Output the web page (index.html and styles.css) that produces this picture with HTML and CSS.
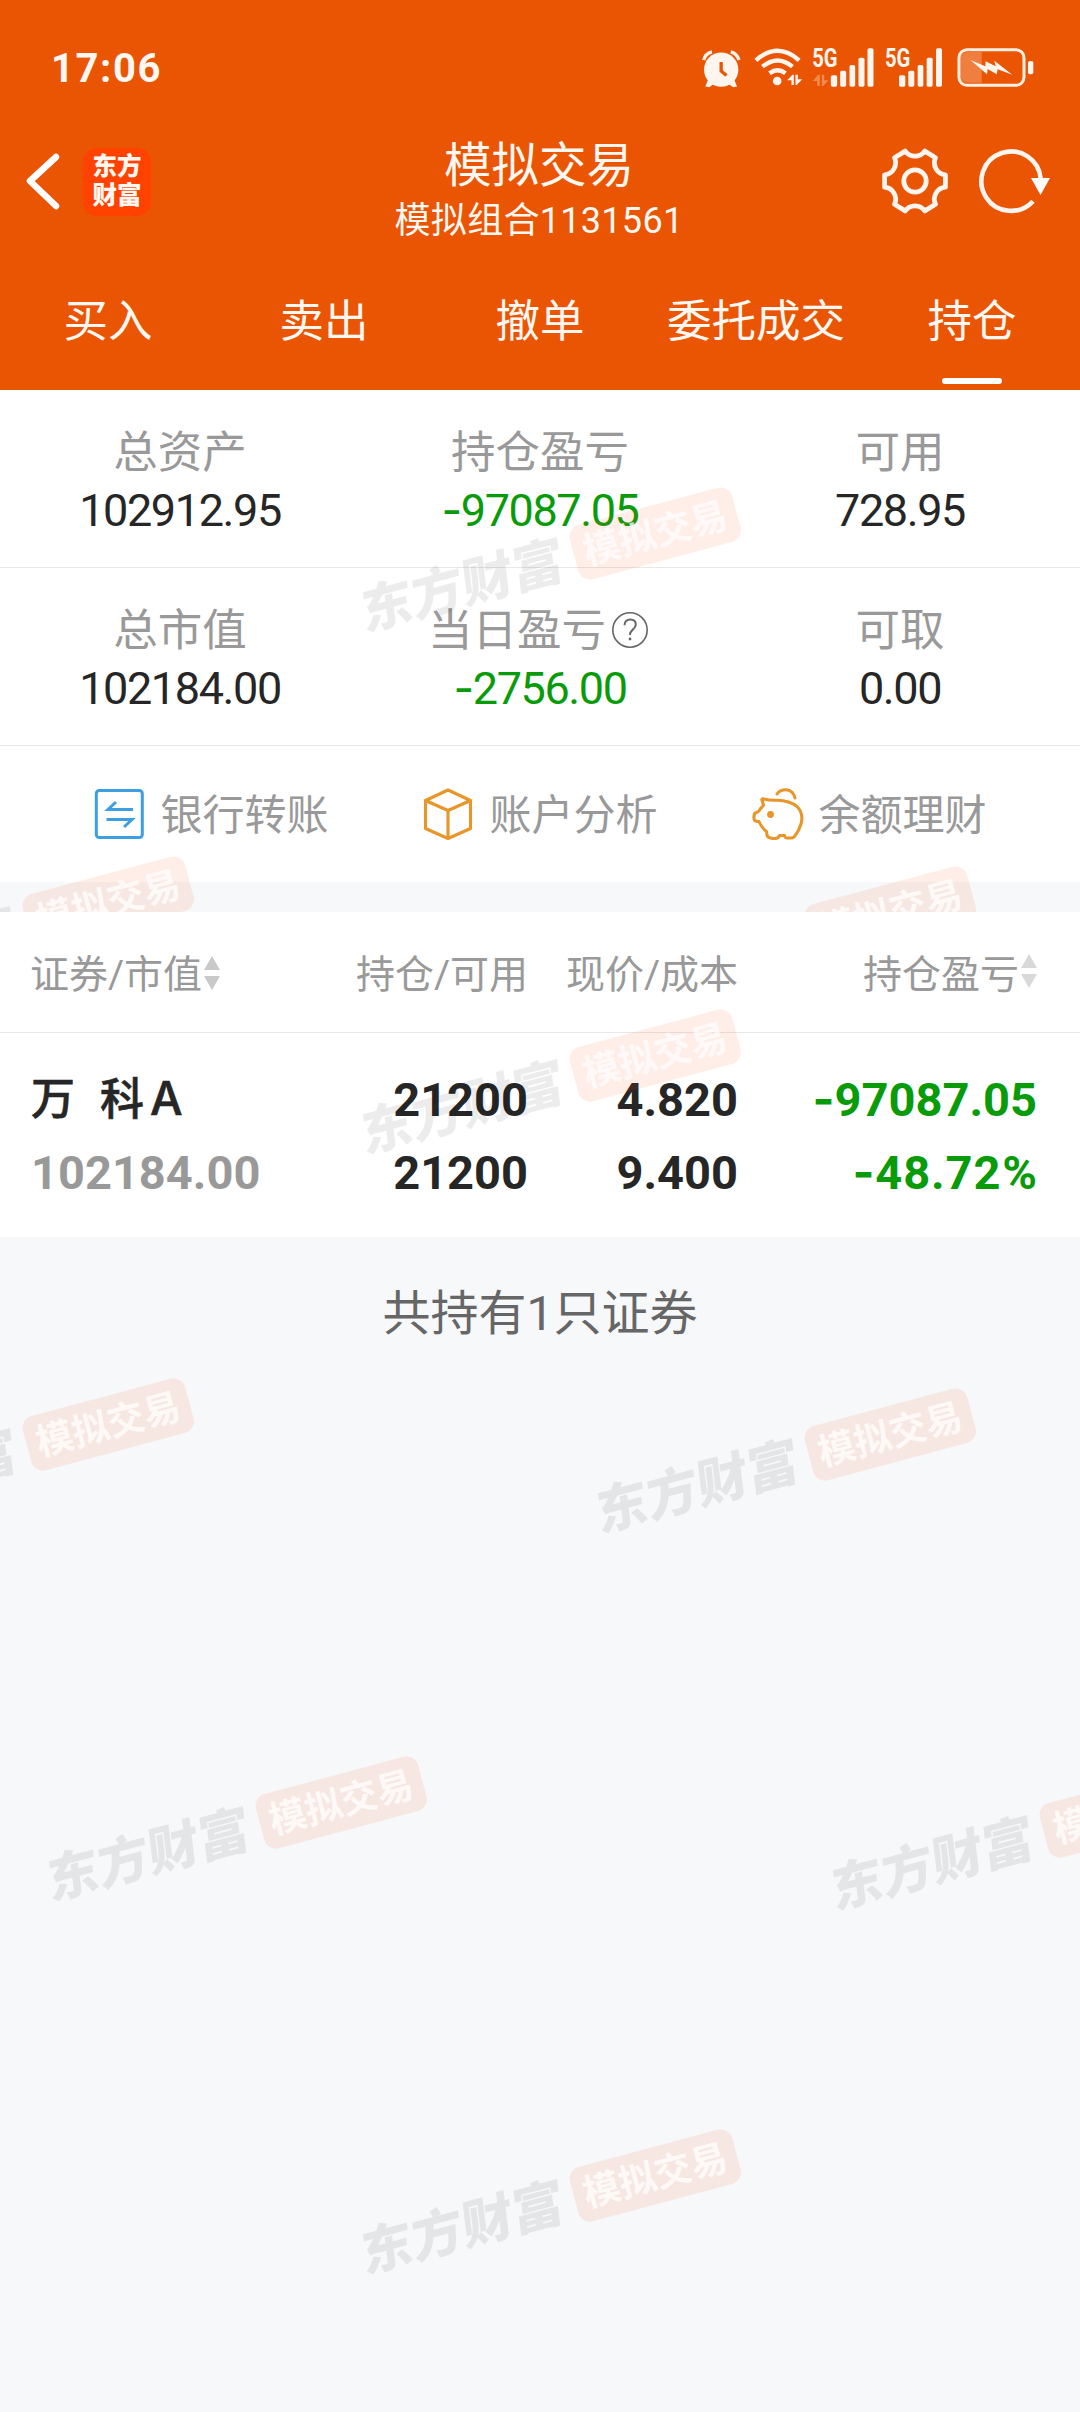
FILE: index.html
```html
<!DOCTYPE html>
<html lang="zh-CN">
<head>
<meta charset="utf-8">
<title>模拟交易</title>
<link rel="stylesheet" href="styles.css">
</head>
<body>
<div class="app">
  <header class="header">
    <div class="status">
      <span class="time">17:06</span>
      <div class="status-icons">
        <svg class="i-alarm" viewBox="66 54 118 120" width="39" height="40">
          <g fill="#fff5ef"><circle cx="124" cy="119" r="52"/><path d="M84 150l-8 20 12 2 16-12zM164 150l8 20-12 2-16-12z"/></g>
          <g fill="none" stroke="#fff5ef" stroke-width="10"><path d="M71 90Q76 70 96 65M178 90Q172 70 153 65"/></g>
          <path d="M124 96v27l16 14" fill="none" stroke="#ea5504" stroke-width="10"/>
        </svg>
        <svg class="i-wifi" viewBox="224 54 146 120" width="49" height="40">
          <g fill="none" stroke="#fff5ef" stroke-width="13"><path d="M229 91Q294 34 359 91M249 110Q294 73 339 110M270 130Q294 112 318 130"/></g>
          <circle cx="293" cy="153" r="13" fill="#fff5ef"/>
          <path d="M323 151l16-17h4v31h-7v-14zM348 134h7v14h13l-16 17h-4z" fill="#fff5ef"/>
        </svg>
        <svg class="i-sig1" viewBox="398 54 188 120" width="63" height="40">
          <text class="g5" x="398" y="111" textLength="76" lengthAdjust="spacingAndGlyphs">5G</text>
          <path d="M400 153l16-19h5v33h-8v-14zM427 134h7v17h13l-16 17h-4z" fill="#f08a4d"/>
          <g fill="#fff5ef"><rect x="454" y="136" width="19" height="34" rx="5"/><rect x="482" y="122" width="18" height="48" rx="5"/><rect x="510" y="105" width="17" height="65" rx="5"/><rect x="537" y="83" width="18" height="87" rx="5"/><rect x="564" y="55" width="18" height="115" rx="5"/></g>
        </svg>
        <svg class="i-sig2" viewBox="616 54 174 120" width="58" height="40">
          <text class="g5" x="616" y="111" textLength="76" lengthAdjust="spacingAndGlyphs">5G</text>
          <g fill="#fff5ef"><rect x="658" y="136" width="19" height="34" rx="5"/><rect x="686" y="122" width="18" height="48" rx="5"/><rect x="714" y="105" width="17" height="65" rx="5"/><rect x="741" y="83" width="18" height="87" rx="5"/><rect x="769" y="55" width="18" height="115" rx="5"/></g>
        </svg>
        <svg class="i-bat" viewBox="830 54 231 120" width="77" height="40">
          <path d="M860 66h44v92h-44q-19 0-19-19V85q0-19 19-19z" fill="#f07f3f"/>
          <rect x="836" y="59" width="195" height="107" rx="24" fill="none" stroke="#fff0e2" stroke-width="9"/>
          <rect x="1043" y="93" width="16" height="40" rx="6" fill="#fff5ef"/>
          <path d="M870 90l45 19 1-15 30 15-4-17 54 42-44-16-3 15-27-16-2 16z" fill="#fff5ef"/>
        </svg>
      </div>
    </div>
    <div class="titlebar">
      <div class="left">
        <svg viewBox="0 0 36 60" width="36" height="60"><path d="M32 6 6 30 32 55" fill="none" stroke="#fff" stroke-width="6.5" stroke-linecap="round" stroke-linejoin="round"/></svg>
        <div class="logo"><span>东方</span><span>财富</span></div>
      </div>
      <div class="titles">
        <div class="title">模拟交易</div>
        <div class="subtitle">模拟组合1131561</div>
      </div>
      <div class="right">
        <svg viewBox="-34 -34 68 68" width="68" height="68" fill="none" stroke="#fff5ee" stroke-width="4.8" stroke-linejoin="round">
          <path d="M30.4-6.2V6.2A12 12 0 0 0 20.5 23.2L9.8 29.9A12 12 0 0 0-9.8 29.9L-20.5 23.2A12 12 0 0 0-30.4 6.2V-6.2A12 12 0 0 0-20.5-23.2L-9.8-29.9A12 12 0 0 0 9.8-29.9L20.5-23.2A12 12 0 0 0 30.4-6.2Z"/>
          <circle r="11.2"/>
        </svg>
        <svg viewBox="-34 -34 74 68" width="74" height="68">
          <path d="M22 20.2A29.7 29.7 0 1 1 29.7-2" fill="none" stroke="#fff5ee" stroke-width="4.6"/>
          <path d="M20-3H39L29.5 14Z" fill="#fff"/>
        </svg>
      </div>
    </div>
    <nav class="tabs">
      <a>买入</a><a>卖出</a><a>撤单</a><a>委托成交</a><a class="active">持仓</a>
    </nav>
  </header>

  <section class="account">
    <div class="summary">
      <div class="cell"><div class="label">总资产</div><div class="value">102912.95</div></div>
      <div class="cell"><div class="label">持仓盈亏</div><div class="value down"><span class="sign">-</span>97087.05</div></div>
      <div class="cell"><div class="label">可用</div><div class="value">728.95</div></div>
    </div>
    <div class="summary">
      <div class="cell"><div class="label">总市值</div><div class="value">102184.00</div></div>
      <div class="cell"><div class="label">当日盈亏<svg class="help" viewBox="0 0 38 38" width="38" height="38" fill="none" stroke="#666" stroke-width="1.6"><circle cx="19" cy="19" r="17.2"/><path d="M13.5 14.2q.3-5.8 5.7-5.8 5.6 0 5.6 5.2 0 2.6-3 5-2.8 2.3-2.8 5.4" stroke-width="2"/><circle cx="19" cy="28" r="1.4" fill="#666" stroke="none"/></svg></div><div class="value down"><span class="sign">-</span>2756.00</div></div>
      <div class="cell"><div class="label">可取</div><div class="value">0.00</div></div>
    </div>
    <div class="actions">
      <a><svg viewBox="0 0 52 52" width="52" height="52" fill="none" stroke="#3b9fe2" stroke-width="3"><rect x="2.3" y="2.5" width="46" height="47" rx="3"/><path d="M39 21.5H14L22 14M12.5 31.5H38L30 39"/></svg>银行转账</a>
      <a><svg viewBox="0 0 52 52" width="52" height="52" fill="none" stroke="#e8952a" stroke-width="3.1" stroke-linejoin="round"><path d="M25 2 47.5 12.5V40.5L25 50.5 2.5 40.5V12.5ZM2.5 12.5 25 22.5 47.5 12.5M25 22.5V50"/></svg>账户分析</a>
      <a><svg viewBox="0 0 52 52" width="52" height="52" fill="none" stroke="#e8952a" stroke-width="3.1" stroke-linecap="round" stroke-linejoin="round"><path d="M9.8 11.5Q10 10.5 12 11 17 12.4 25 12.2 38 12.5 45 18.5 52 25.5 49 36 47 43 42.5 48.5 41.5 50 39 50H34.5Q33 49.8 32.5 47.5H27.5Q26.5 50.5 23 50.5 18 50.8 15.5 48.5 14.8 47 14.5 43.5 10 40.5 7 33.5 2.5 34 2 30.5 1.5 25 4.5 24.5 7 24 8.5 20.5 11 18.5 11.5 17ZM25 6Q28 1.5 34.5 1.8 41.5 3 43 10"/><circle cx="18.5" cy="26.5" r="3.4" fill="#e8952a" stroke="none"/></svg>余额理财</a>
    </div>
    <div class="gap"></div>
    <div class="mark" style="left:355px;top:144px"><b>东方财富</b><i>模拟交易</i></div>
    <div class="mark" style="left:-192px;top:513px"><b>东方财富</b><i>模拟交易</i></div>
    <div class="mark" style="left:590px;top:523px"><b>东方财富</b><i>模拟交易</i></div>
  </section>

  <section class="holdings">
    <div class="row head">
      <span>证券/市值<svg class="sort" viewBox="0 0 16 34" width="16" height="34" fill="#c9c9c9"><path d="M8 0 16 14H0ZM8 34 0 20H16Z"/></svg></span>
      <span>持仓/可用</span>
      <span>现价/成本</span>
      <span>持仓盈亏<svg class="sort up" viewBox="0 0 16 34" width="16" height="34" fill="#d9d9d9"><path d="M8 0 16 14H0ZM8 34 0 20H16Z"/></svg></span>
    </div>
    <div class="row item">
      <div><p class="name">万 科<span class="latin">A</span></p><p class="muted">102184.00</p></div>
      <div><p>21200</p><p>21200</p></div>
      <div><p>4.820</p><p>9.400</p></div>
      <div class="down"><p><span class="sign">-</span>97087.05</p><p><span class="sign">-</span>48.72<span class="pct">%</span></p></div>
    </div>
    <p class="total">共持有1只证券</p>
    <div class="mark" style="left:355px;top:144px"><b>东方财富</b><i>模拟交易</i></div>
    <div class="mark" style="left:-192px;top:513px"><b>东方财富</b><i>模拟交易</i></div>
    <div class="mark" style="left:590px;top:523px"><b>东方财富</b><i>模拟交易</i></div>
    <div class="mark" style="left:41px;top:891px"><b>东方财富</b><i>模拟交易</i></div>
    <div class="mark" style="left:825px;top:900px"><b>东方财富</b><i>模拟交易</i></div>
    <div class="mark" style="left:355px;top:1264px"><b>东方财富</b><i>模拟交易</i></div>
  </section>
</div>
</body>
</html>
```
FILE: styles.css
```css
* { box-sizing: border-box; }
body {
  margin: 0;
  background: #f7f8fa;
  font-family: Roboto, "Noto Sans CJK SC", sans-serif;
  color: #262626;
}
p { margin: 0; }
svg { display: block; flex: none; }
.app {
  width: 1080px;
  height: 2412px;
  display: flex;
  flex-direction: column;
  overflow: hidden;
}

/* Header */
.header {
  height: 390px;
  flex: none;
  background: #ea5504;
  color: #fff8f2;
}
.status {
  height: 130px;
  padding: 0 46px 0 51px;
  display: flex;
  justify-content: space-between;
  align-items: flex-start;
}
.time {
  margin-top: 44px;
  font-size: 40px;
  line-height: 50px;
  font-weight: 700;
  letter-spacing: 1.6px;
}
.status-icons { display: flex; margin-top: 48px; }
.status-icons svg { overflow: visible; }
.i-wifi { margin-left: 13px; }
.i-sig1 { margin-left: 9px; }
.i-sig2 { margin-left: 10px; }
.i-bat { margin-left: 14px; }
.g5 { font-size: 76px; font-weight: 700; fill: #fff5ef; }

.titlebar {
  height: 144px;
  display: grid;
  grid-template-columns: 300px 1fr 300px;
}
.left { display: flex; padding: 18px 0 0 24px; gap: 23px; }
.left > svg { margin-top: 3px; }
.logo {
  width: 68px;
  height: 68px;
  border-radius: 14px;
  background: #ff4200;
  display: flex;
  flex-direction: column;
  align-items: center;
  padding-top: 4px;
  font-size: 24.5px;
  line-height: 29px;
  font-weight: 900;
}
.titles { text-align: center; }
.title { margin: 6px 2px 0 0; font-size: 47.5px; line-height: 60px; }
.subtitle { font-size: 36px; line-height: 48px; letter-spacing: .3px; margin: 1px 2px 0 0; }
.right { display: flex; padding: 17px 0 0 101px; gap: 28px; }

.tabs { display: grid; grid-template-columns: repeat(5, 1fr); height: 116px; }
.tabs a {
  position: relative;
  text-align: center;
  font-size: 44.5px;
  line-height: 60px;
  padding-top: 18px;
}
.tabs .active::after {
  content: "";
  position: absolute;
  left: 78px;
  bottom: 6px;
  width: 60px;
  height: 6px;
  border-radius: 3px;
  background: #fff;
}

/* Account summary */
.account { position: relative; overflow: hidden; background: #fff; height: 522px; flex: none; }
.summary {
  display: grid;
  grid-template-columns: repeat(3, 1fr);
  height: 178px;
  padding-top: 33px;
  border-bottom: 1px solid #e8e8e8;
}
.cell { text-align: center; }
.label {
  display: flex;
  justify-content: center;
  align-items: center;
  color: #999;
  font-size: 44.5px;
  line-height: 60px;
}
.help { margin: -3px 3px 0 5px; }
.value { margin-top: 3px; font-size: 45px; line-height: 50px; letter-spacing: -1.4px; }
.sign { font-family: Inter, sans-serif; line-height: 1; }
.down { color: #099b09; }
.actions {
  display: grid;
  grid-template-columns: repeat(3, 329px);
  height: 136px;
  padding: 0 47px;
}
.actions a {
  display: flex;
  align-items: center;
  justify-content: center;
  gap: 14px;
  color: #999;
  font-size: 42px;
  line-height: 60px;
  padding-top: 3px;
}
.actions svg { margin-top: -3px; }
.gap { height: 30px; background: #f7f8fa; }

/* Holdings table */
.holdings { position: relative; flex: 1; overflow: hidden; }
.row {
  display: grid;
  grid-template-columns: 292px 205px 210px 299px;
  padding: 0 31px;
  background: #fff;
  text-align: right;
}
.row > :first-child { text-align: left; justify-content: flex-start; }
.head {
  height: 121px;
  border-bottom: 1px solid #e8e8e8;
  color: #999;
  font-size: 39px;
}
.head > span { display: flex; align-items: center; justify-content: flex-end; padding-bottom: 3px; }
.head > span:first-child { margin-left: -1px; }
.sort { margin: 5px 0 0 2px; }
.sort.up { margin-top: 1px; }
.item {
  height: 204px;
  padding-top: 30px;
  font-size: 47px;
  font-weight: 700;
  line-height: 73px;
}
.item p { height: 73px; }
.name { font-size: 44px; font-weight: 500; word-spacing: 12px; letter-spacing: 1px; padding-top: 1px; -webkit-text-stroke: .6px #262626; }
.latin { font-family: Inter, sans-serif; font-size: 46px; font-weight: 500; line-height: 1; margin-left: 5px; }
.pct { margin-left: 1px; }
.item .down p:last-child { letter-spacing: .9px; margin-right: -1px; }
.muted { color: #999; }
.total { text-align: center; color: #666; font-size: 48px; line-height: 60px; margin-top: 47px; }

/* Watermark */
.mark {
  position: absolute;
  width: 388px;
  height: 56px;
  display: flex;
  align-items: center;
  justify-content: space-between;
  transform: rotate(-15deg);
  white-space: nowrap;
  pointer-events: none;
}
.mark b {
  font-size: 52px;
  line-height: 56px;
  font-weight: 900;
  color: rgba(0, 0, 0, .075);
  transform: translateY(2px) skewX(-8deg);
}
.mark i {
  width: 168px;
  height: 56px;
  border-radius: 12px;
  background: rgba(255, 85, 15, .1);
  color: rgba(255, 255, 255, .75);
  font-style: normal;
  font-weight: 700;
  font-size: 37px;
  line-height: 58px;
  text-align: center;
}
```
